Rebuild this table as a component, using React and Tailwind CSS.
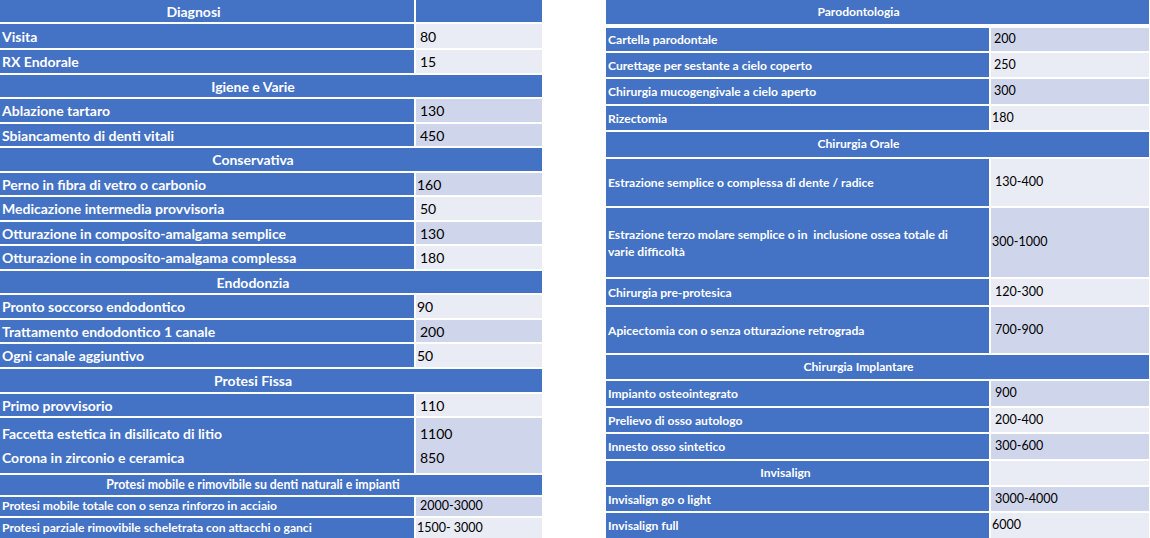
import React from "react";

const BLUE = "bg-[#4472c4]";
const LIGHT = "bg-[#e9ebf5]";
const DARK = "bg-[#cfd5ea]";

const leftRows = [
  { type: "head2", label: "Diagnosi", h: "h-[22px]" },
  { label: "Visita", value: "80", h: "h-[24px]", bg: LIGHT, vp: "pl-[4px]" },
  { label: "RX Endorale", value: "15", h: "h-[23px]", bg: LIGHT, vp: "pl-[4px]" },
  { type: "head", label: "Igiene e Varie", h: "h-[22px]" },
  { label: "Ablazione tartaro", value: "130", h: "h-[23px]", bg: DARK, vp: "pl-[4px]" },
  { label: "Sbiancamento di denti vitali", value: "450", h: "h-[22px]", bg: DARK, vp: "pl-[4px]" },
  { type: "head", label: "Conservativa", h: "h-[23px]" },
  { label: "Perno in fibra di vetro o carbonio", value: "160", h: "h-[22px]", bg: DARK, vp: "pl-[1px]" },
  { label: "Medicazione intermedia provvisoria", value: "50", h: "h-[23px]", bg: LIGHT, vp: "pl-[4px]" },
  { label: "Otturazione in composito-amalgama semplice", value: "130", h: "h-[22px]", bg: DARK, vp: "pl-[4px]" },
  { label: "Otturazione in composito-amalgama complessa", value: "180", h: "h-[23px]", bg: LIGHT, vp: "pl-[4px]" },
  { type: "head", label: "Endodonzia", h: "h-[22px]" },
  { label: "Pronto soccorso endodontico", value: "90", h: "h-[23px]", bg: LIGHT, vp: "pl-[1px]" },
  { label: "Trattamento endodontico 1 canale", value: "200", h: "h-[22px]", bg: DARK, vp: "pl-[4px]" },
  { label: "Ogni canale aggiuntivo", value: "50", h: "h-[23px]", bg: LIGHT, vp: "pl-[1px]" },
  { type: "head", label: "Protesi Fissa", h: "h-[23px]" },
  { label: "Primo provvisorio", value: "110", h: "h-[22px]", bg: LIGHT, vp: "pl-[4px]" },
  { type: "double", labels: ["Faccetta estetica in disilicato di litio", "Corona in zirconio e ceramica"], values: ["1100", "850"], h: "h-[55px]", bg: DARK, vp: "pl-[4px]" },
  { type: "headsmall", label: "Protesi mobile e rimovibile su denti naturali e impianti", h: "h-[20px]" },
  { label: "Protesi mobile totale con o senza rinforzo in acciaio", value: "2000-3000", h: "h-[19px]", bg: DARK, vp: "pl-[4px]", small: true },
  { label: "Protesi parziale rimovibile scheletrata con attacchi o ganci", value: "1500- 3000", h: "h-[20px]", bg: LIGHT, vp: "pl-[1px]", small: true },
];

const rightRows = [
  { type: "head", label: "Parodontologia", h: "h-[24px]", extra: "mb-[2px]" },
  { label: "Cartella parodontale", value: "200", h: "h-[23px]", bg: DARK, vp: "pl-[3px]" },
  { label: "Curettage per sestante a cielo coperto", value: "250", h: "h-[24px]", bg: LIGHT, vp: "pl-[3px]" },
  { label: "Chirurgia mucogengivale a cielo aperto", value: "300", h: "h-[25px]", bg: DARK, vp: "pl-[3px]" },
  { label: "Rizectomia", value: "180", h: "h-[24px]", bg: LIGHT, vp: "pl-[1px]" },
  { type: "head", label: "Chirurgia Orale", h: "h-[25px]" },
  { label: "Estrazione semplice o complessa di dente / radice", value: "130-400", h: "h-[47px]", bg: LIGHT, vp: "pl-[4px]" },
  { label: ["Estrazione terzo molare semplice o in\u00a0 inclusione ossea totale di", "varie difficoltà"], value: "300-1000", h: "h-[69px]", bg: DARK, vp: "pl-[1px]" },
  { label: "Chirurgia pre-protesica", value: "120-300", h: "h-[26px]", bg: LIGHT, vp: "pl-[4px]" },
  { label: "Apicectomia con o senza otturazione retrograda", value: "700-900", h: "h-[46px]", bg: DARK, vp: "pl-[4px]" },
  { type: "head", label: "Chirurgia Implantare", h: "h-[24px]" },
  { label: "Impianto osteointegrato", value: "900", h: "h-[25px]", bg: DARK, vp: "pl-[4px]" },
  { label: "Prelievo di osso autologo", value: "200-400", h: "h-[24px]", bg: LIGHT, vp: "pl-[4px]" },
  { label: "Innesto osso sintetico", value: "300-600", h: "h-[25px]", bg: DARK, vp: "pl-[4px]" },
  { type: "headlabel", label: "Invisalign", h: "h-[24px]", bg: LIGHT },
  { label: "Invisalign go o light", value: "3000-4000", h: "h-[24px]", bg: DARK, vp: "pl-[4px]" },
  { label: "Invisalign full", value: "6000", h: "h-[25px]", bg: LIGHT, vp: "pl-[1px]" },
];

const font = { fontFamily: "Lato, 'Open Sans', sans-serif" };

function LeftRow({ r }) {
  if (r.type === "head") {
    return (
      <div className={`${r.h} ${BLUE} flex items-center justify-center pr-[36px] text-white font-bold text-[14px]`}>
        {r.label}
      </div>
    );
  }
  if (r.type === "headsmall") {
    return (
      <div className={`${r.h} ${BLUE} flex items-center justify-center pr-[36px] text-white font-bold text-[12.3px]`}>
        {r.label}
      </div>
    );
  }
  if (r.type === "head2") {
    return (
      <div className={`${r.h} flex gap-[2px]`}>
        <div className={`w-[414px] ${BLUE} flex items-center justify-center pr-[27px] text-white font-bold text-[14px]`}>
          {r.label}
        </div>
        <div className={`flex-1 ${BLUE}`}></div>
      </div>
    );
  }
  if (r.type === "double") {
    return (
      <div className={`${r.h} flex gap-[2px]`}>
        <div className={`w-[414px] ${BLUE} flex flex-col justify-center pl-[2px] text-white font-bold text-[14px] leading-[24px]`}>
          {r.labels.map((l) => (
            <div key={l}>{l}</div>
          ))}
        </div>
        <div className={`flex-1 ${r.bg} flex flex-col justify-center ${r.vp} text-black text-[14px] leading-[24px]`}>
          {r.values.map((v) => (
            <div key={v}>{v}</div>
          ))}
        </div>
      </div>
    );
  }
  return (
    <div className={`${r.h} flex gap-[2px]`}>
      <div
        className={`w-[414px] ${BLUE} flex items-center pl-[2px] text-white font-bold ${r.small ? "text-[12.1px]" : "text-[14px]"} whitespace-nowrap`}
      >
        {r.label}
      </div>
      <div className={`flex-1 ${r.bg} flex items-center ${r.vp} text-black ${r.small ? "text-[12.5px]" : "text-[14px]"}`}>
        {r.value}
      </div>
    </div>
  );
}

function RightRow({ r }) {
  if (r.type === "head") {
    return (
      <div className={`${r.h} ${r.extra || ""} ${BLUE} flex items-center justify-center pr-[38px] text-white font-bold text-[12.1px]`}>
        {r.label}
      </div>
    );
  }
  if (r.type === "headlabel") {
    return (
      <div className={`${r.h} flex gap-[2px]`}>
        <div className={`w-[383px] ${BLUE} flex items-center justify-center pr-[24px] text-white font-bold text-[12.1px]`}>
          {r.label}
        </div>
        <div className={`flex-1 ${r.bg}`}></div>
      </div>
    );
  }
  const lines = Array.isArray(r.label) ? r.label : [r.label];
  return (
    <div className={`${r.h} flex gap-[2px]`}>
      <div className={`w-[383px] ${BLUE} flex flex-col justify-center pl-[2px] text-white font-bold text-[12.1px] leading-[17px] whitespace-nowrap`}>
        {lines.map((l) => (
          <div key={l}>{l}</div>
        ))}
      </div>
      <div className={`flex-1 ${r.bg} flex items-center ${r.vp} text-black text-[12.5px]`}>{r.value}</div>
    </div>
  );
}

export default function App() {
  return (
    <div className="w-[1150px] h-[538px] bg-white flex overflow-hidden" style={font}>
      <div className="w-[542px] flex flex-col gap-[2px]">
        {leftRows.map((r, i) => (
          <LeftRow key={i} r={r} />
        ))}
      </div>
      <div className="w-[543px] ml-[64px] flex flex-col gap-[2px]">
        {rightRows.map((r, i) => (
          <RightRow key={i} r={r} />
        ))}
      </div>
    </div>
  );
}
